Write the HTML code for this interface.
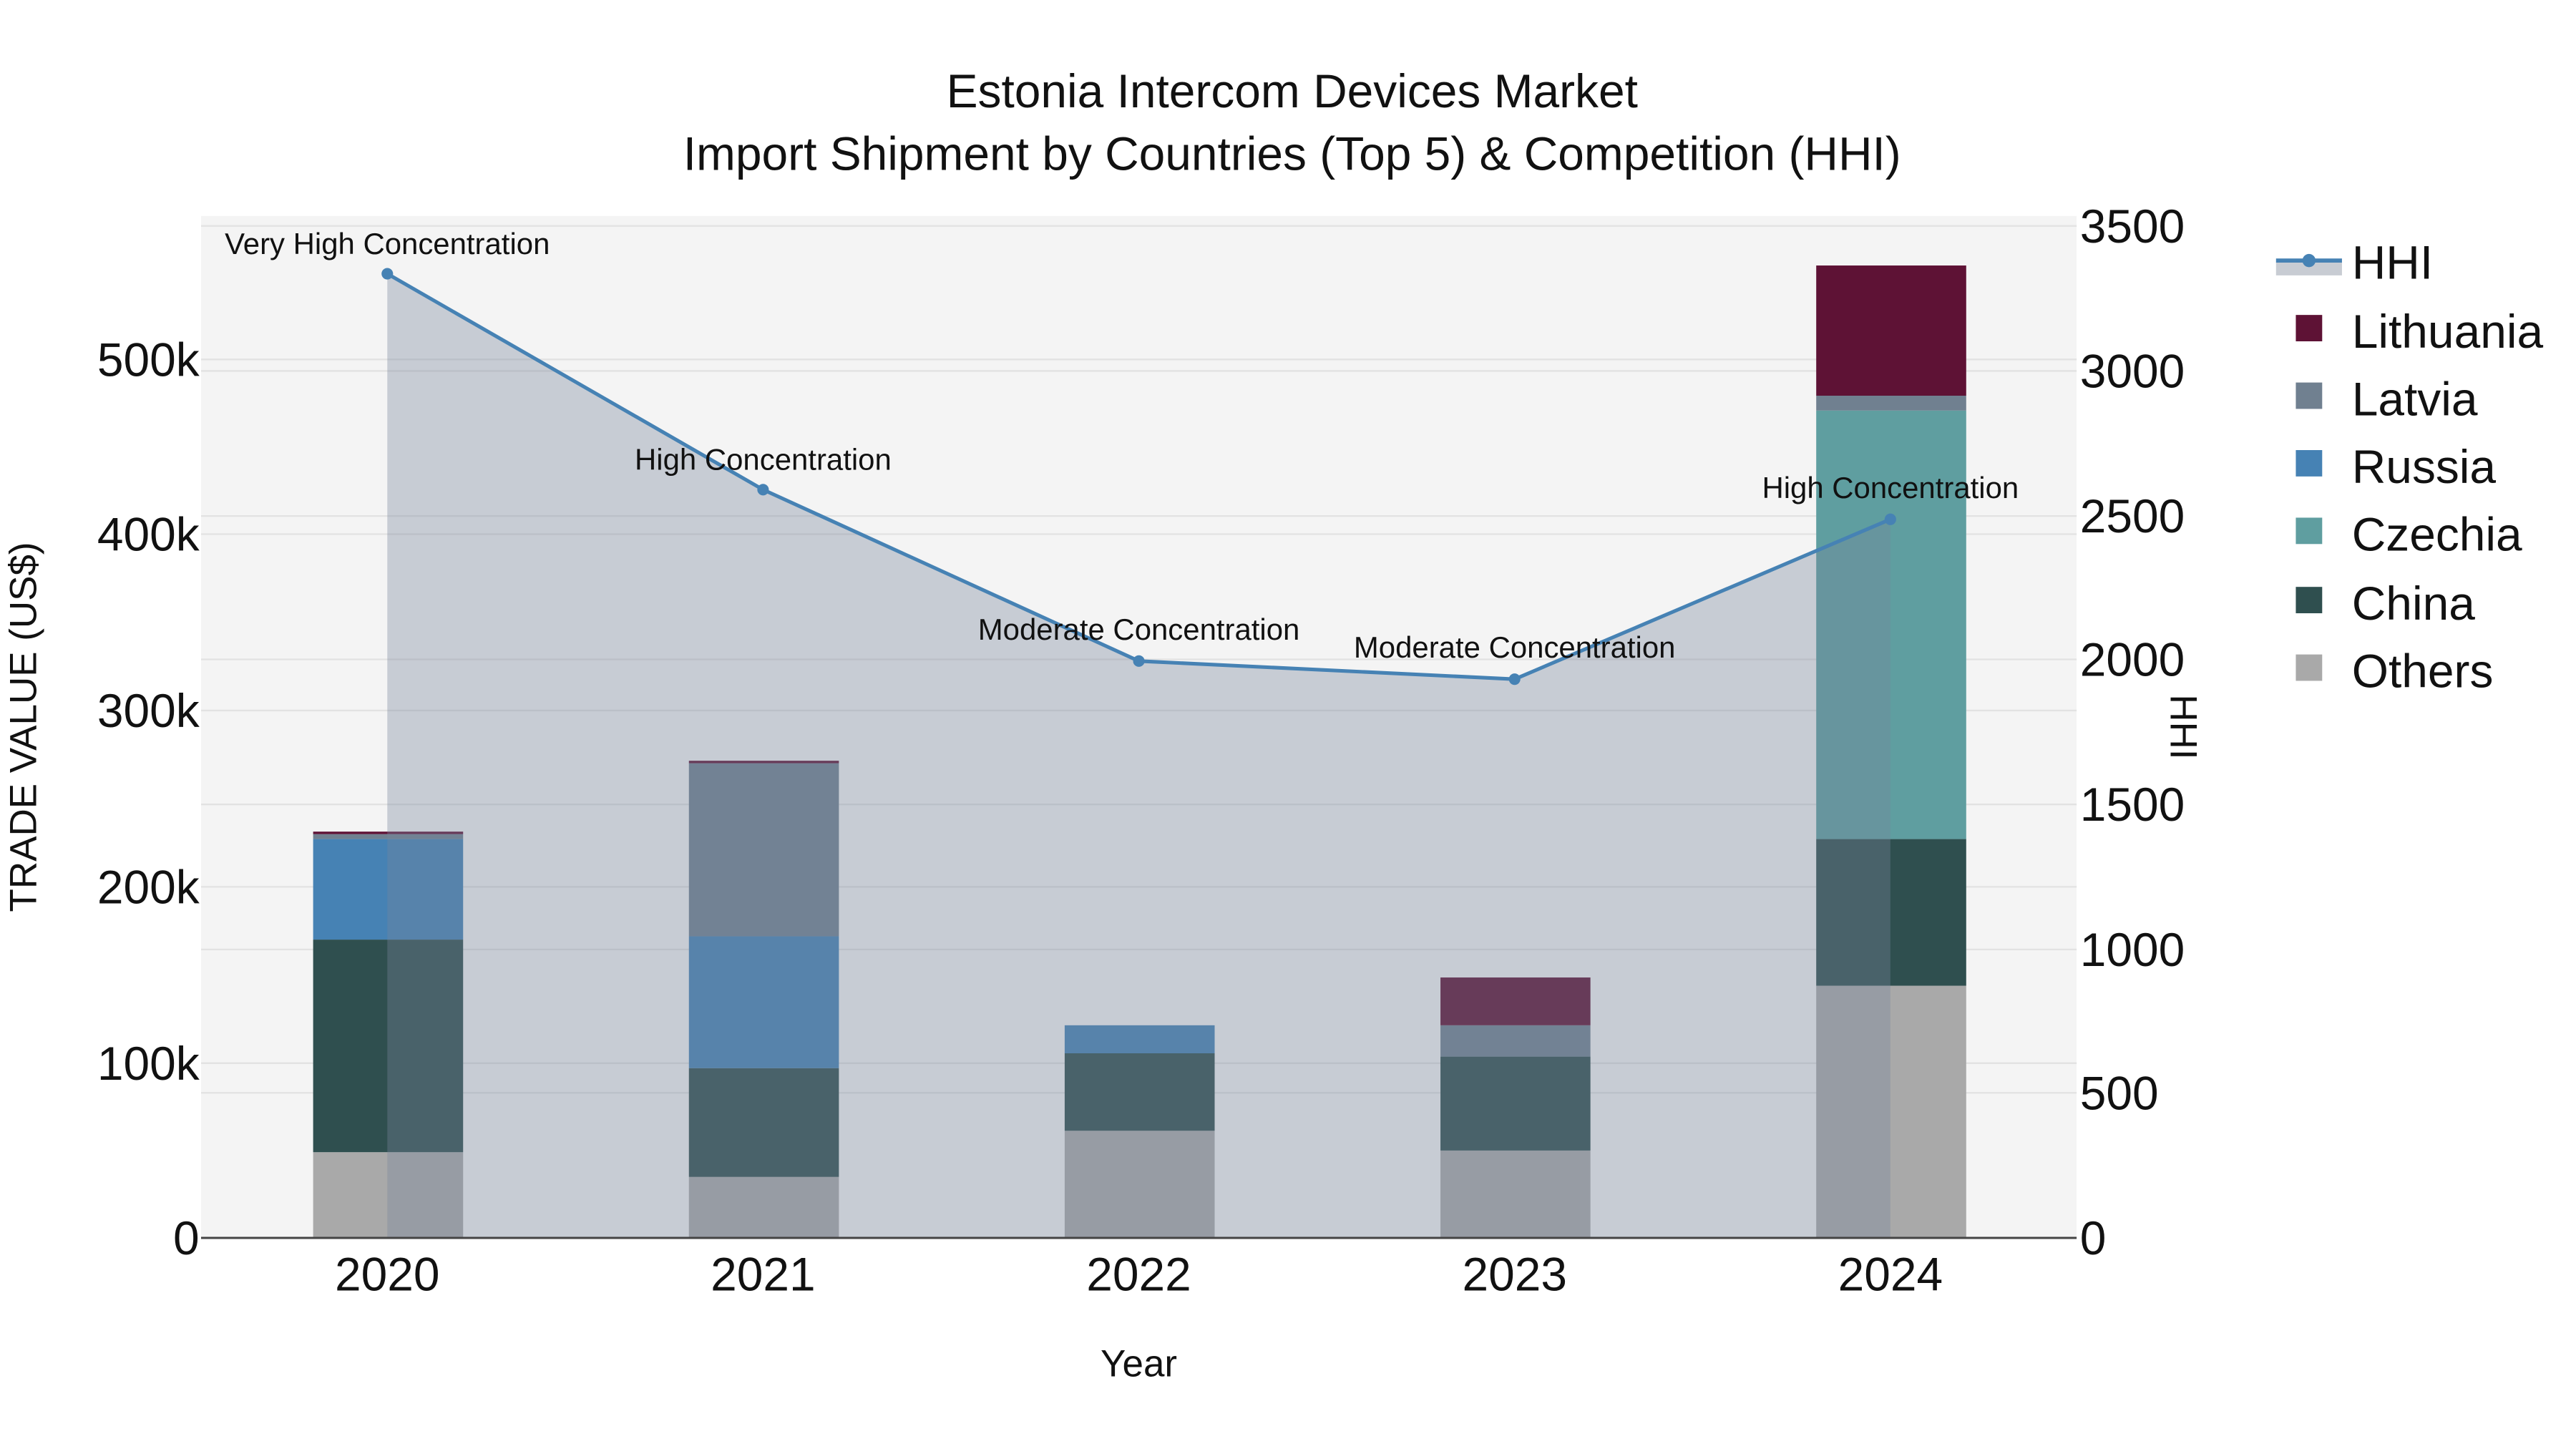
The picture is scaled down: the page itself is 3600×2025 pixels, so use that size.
<!DOCTYPE html>
<html><head><meta charset="utf-8"><style>
html,body{margin:0;padding:0;background:#fff;}
svg{display:block;}
text{font-family:"Liberation Sans",sans-serif;fill:#111;}
</style></head><body>
<svg width="3600" height="2025" viewBox="0 0 1563 879" xmlns="http://www.w3.org/2000/svg">
<rect x="0" y="0" width="1563" height="879" fill="#fff"/>
<rect x="122" y="131" width="1138" height="620" fill="#f4f4f4"/>
<g stroke="#e2e2e2" stroke-width="1">
<line x1="122" x2="1260" y1="645" y2="645"/>
<line x1="122" x2="1260" y1="538" y2="538"/>
<line x1="122" x2="1260" y1="431" y2="431"/>
<line x1="122" x2="1260" y1="324" y2="324"/>
<line x1="122" x2="1260" y1="218" y2="218"/>
<line x1="122" x2="1260" y1="663" y2="663"/>
<line x1="122" x2="1260" y1="576" y2="576"/>
<line x1="122" x2="1260" y1="488" y2="488"/>
<line x1="122" x2="1260" y1="400" y2="400"/>
<line x1="122" x2="1260" y1="313" y2="313"/>
<line x1="122" x2="1260" y1="225" y2="225"/>
<line x1="122" x2="1260" y1="137" y2="137"/>
</g>
<g>
<rect x="190" y="699" width="91" height="52" fill="#a9a9a9"/>
<rect x="190" y="570" width="91" height="129" fill="#2f4f4f"/>
<rect x="190" y="509" width="91" height="61" fill="#4682b4"/>
<rect x="190" y="506" width="91" height="3" fill="#708090"/>
<rect x="190" y="504.5" width="91" height="1.5" fill="#5e1235"/>
<rect x="418" y="714" width="91" height="37" fill="#a9a9a9"/>
<rect x="418" y="648" width="91" height="66" fill="#2f4f4f"/>
<rect x="418" y="568" width="91" height="80" fill="#4682b4"/>
<rect x="418" y="463" width="91" height="105" fill="#708090"/>
<rect x="418" y="461.5" width="91" height="1.5" fill="#5e1235"/>
<rect x="646" y="686" width="91" height="65" fill="#a9a9a9"/>
<rect x="646" y="639" width="91" height="47" fill="#2f4f4f"/>
<rect x="646" y="622" width="91" height="17" fill="#4682b4"/>
<rect x="874" y="698" width="91" height="53" fill="#a9a9a9"/>
<rect x="874" y="641" width="91" height="57" fill="#2f4f4f"/>
<rect x="874" y="622" width="91" height="19" fill="#708090"/>
<rect x="874" y="593" width="91" height="29" fill="#5e1235"/>
<rect x="1102" y="598" width="91" height="153" fill="#a9a9a9"/>
<rect x="1102" y="509" width="91" height="89" fill="#2f4f4f"/>
<rect x="1102" y="249" width="91" height="260" fill="#5f9ea0"/>
<rect x="1102" y="240" width="91" height="9" fill="#708090"/>
<rect x="1102" y="161" width="91" height="79" fill="#5e1235"/>
</g>
<polygon points="235,751 235,166 463,297 691,401 919,412 1147,315 1147,751" fill="rgb(120,134,155)" fill-opacity="0.36"/>
<polyline points="235,166 463,297 691,401 919,412 1147,315" fill="none" stroke="#4682b4" stroke-width="2.2"/>
<g fill="#4682b4">
<circle cx="235" cy="166" r="3.5"/><circle cx="463" cy="297" r="3.5"/><circle cx="691" cy="401" r="3.5"/><circle cx="919" cy="412" r="3.5"/><circle cx="1147" cy="315" r="3.5"/>
</g>
<line x1="122" x2="1260" y1="751" y2="751" stroke="#444" stroke-width="1.3"/>
<g font-size="18.2" text-anchor="middle">
<text x="235" y="154">Very High Concentration</text>
<text x="463" y="285">High Concentration</text>
<text x="691" y="388">Moderate Concentration</text>
<text x="919" y="399">Moderate Concentration</text>
<text x="1147" y="302">High Concentration</text>
</g>
<g font-size="28.6" text-anchor="middle">
<text x="784" y="65">Estonia Intercom Devices Market</text>
<text x="784" y="103">Import Shipment by Countries (Top 5) &amp; Competition (HHI)</text>
</g>
<g font-size="28.6" text-anchor="end">
<text x="121" y="761">0</text>
<text x="121" y="655">100k</text>
<text x="121" y="548">200k</text>
<text x="121" y="441">300k</text>
<text x="121" y="334">400k</text>
<text x="121" y="228">500k</text>
</g>
<g font-size="28.6" text-anchor="start">
<text x="1262" y="761">0</text>
<text x="1262" y="673">500</text>
<text x="1262" y="586">1000</text>
<text x="1262" y="498">1500</text>
<text x="1262" y="410">2000</text>
<text x="1262" y="323">2500</text>
<text x="1262" y="235">3000</text>
<text x="1262" y="147">3500</text>
</g>
<g font-size="28.6" text-anchor="middle">
<text x="235" y="783">2020</text>
<text x="463" y="783">2021</text>
<text x="691" y="783">2022</text>
<text x="919" y="783">2023</text>
<text x="1147" y="783">2024</text>
</g>
<text x="691" y="835" font-size="23" text-anchor="middle">Year</text>
<text transform="translate(22,441) rotate(-90)" font-size="23" text-anchor="middle">TRADE VALUE (US$)</text>
<text transform="translate(1317,441) rotate(90)" font-size="23" text-anchor="middle">HHI</text>
<rect x="1381" y="159" width="40" height="8" fill="#c8ccd3"/>
<line x1="1381" x2="1421" y1="158" y2="158" stroke="#4682b4" stroke-width="2.5"/>
<circle cx="1401" cy="158" r="4" fill="#4682b4"/>
<g font-size="28.6">
<text x="1427" y="169">HHI</text>
<text x="1427" y="211">Lithuania</text>
<text x="1427" y="252">Latvia</text>
<text x="1427" y="293">Russia</text>
<text x="1427" y="334">Czechia</text>
<text x="1427" y="376">China</text>
<text x="1427" y="417">Others</text>
</g>
<rect x="1393" y="191" width="16" height="16" fill="#5e1235"/>
<rect x="1393" y="232" width="16" height="16" fill="#708090"/>
<rect x="1393" y="273" width="16" height="16" fill="#4682b4"/>
<rect x="1393" y="314" width="16" height="16" fill="#5f9ea0"/>
<rect x="1393" y="356" width="16" height="16" fill="#2f4f4f"/>
<rect x="1393" y="397" width="16" height="16" fill="#a9a9a9"/>
</svg>
</body></html>
